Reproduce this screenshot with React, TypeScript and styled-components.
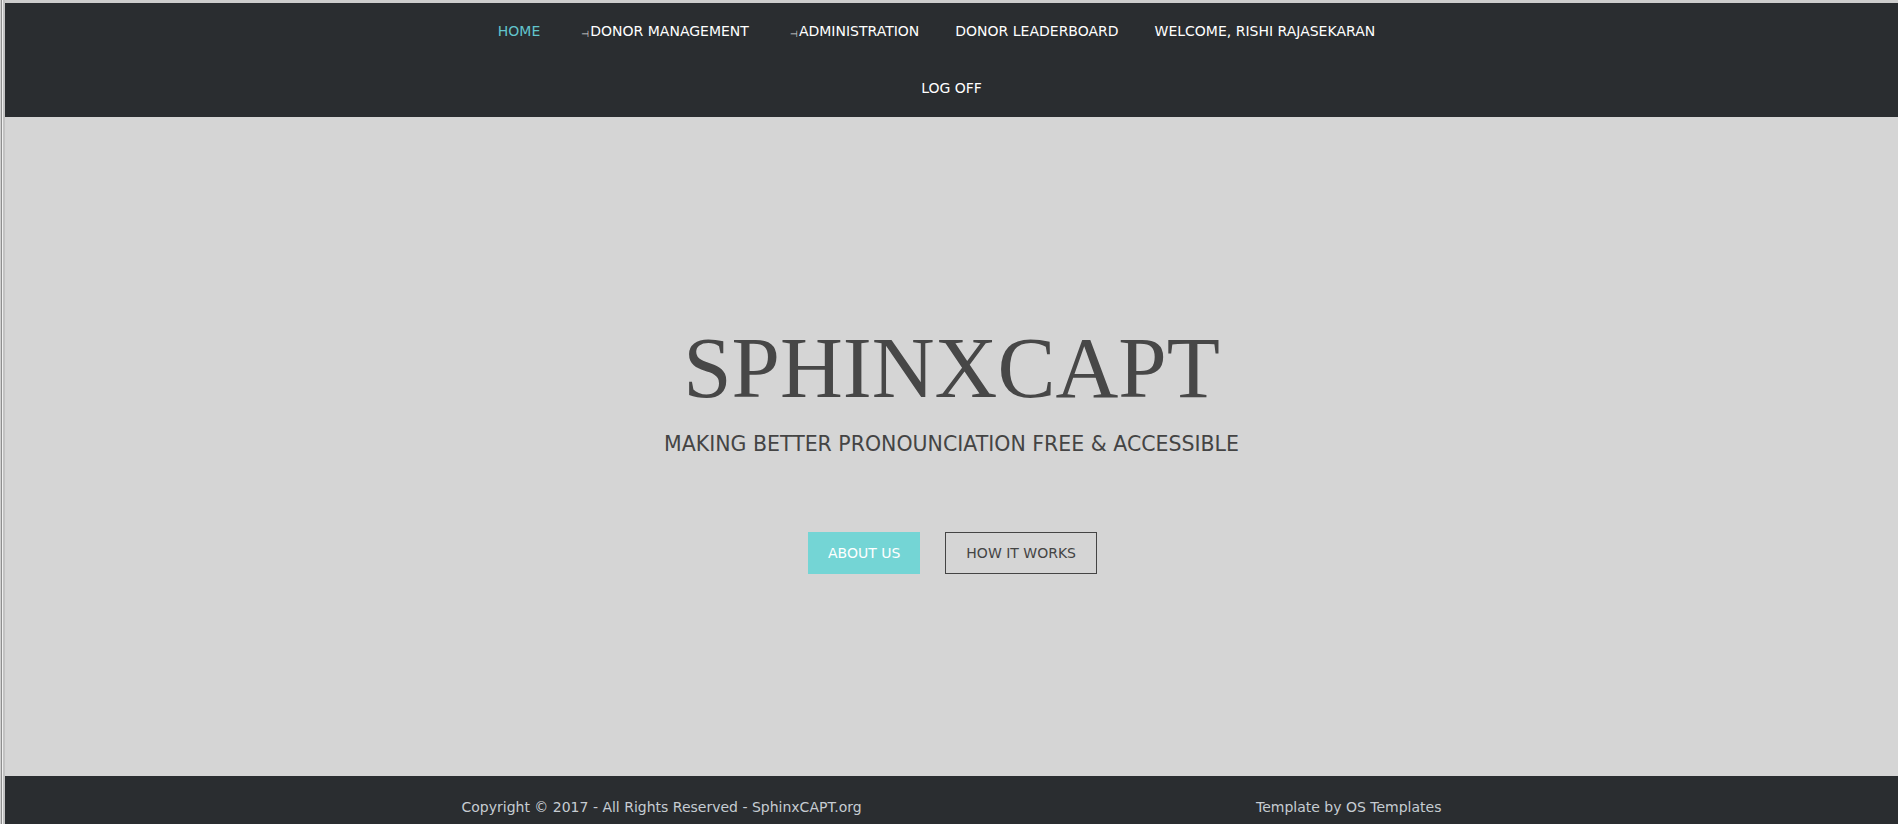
import React from "react";
import styled, { createGlobalStyle } from "styled-components";

const GlobalStyle = createGlobalStyle`
  html, body {
    margin: 0;
    padding: 0;
    background: #d0d0d0;
  }
  body {
    font-family: "DejaVu Sans", Verdana, sans-serif;
  }
`;

const navItems = [
  { label: "HOME", active: true },
  { label: "DONOR MANAGEMENT", caret: true },
  { label: "ADMINISTRATION", caret: true },
  { label: "DONOR LEADERBOARD" },
  { label: "WELCOME, RISHI RAJASEKARAN", trailing: true },
  { label: "LOG OFF" },
];

function App() {
  return (
    <>
      <GlobalStyle />
      <Frame>
        <TopBar>
          <NavList>
            {navItems.map((item) => (
              <NavItem
                key={item.label}
                $active={item.active}
                $trailing={item.trailing}
              >
                {item.caret && <Caret>⊣</Caret>}
                {item.label}
              </NavItem>
            ))}
          </NavList>
        </TopBar>

        <Hero>
          <Title>SPHINXCAPT</Title>
          <Tagline>MAKING BETTER PRONOUNCIATION FREE &amp; ACCESSIBLE</Tagline>
          <Buttons>
            <Button $primary>ABOUT US</Button>
            <Button>HOW IT WORKS</Button>
          </Buttons>
        </Hero>

        <Footer>
          <FooterInner>
            <span>Copyright © 2017 - All Rights Reserved - SphinxCAPT.org</span>
            <span>Template by OS Templates</span>
          </FooterInner>
        </Footer>
      </Frame>
    </>
  );
}

const Frame = styled.div`
  min-height: 824px;
  box-sizing: border-box;
  padding: 3px 0 0 5px;
  background:
    linear-gradient(
        to right,
        #cfcfcf 0 1px,
        #8e8e8e 1px 2px,
        #efefef 2px 3px,
        #c2c2c2 3px 5px
      )
      left top / 5px 100% no-repeat,
    #cdcdcd;
  display: flex;
  flex-direction: column;
`;

const TopBar = styled.header`
  background: #2a2d30;
  display: flex;
  justify-content: center;
`;

const NavList = styled.ul`
  width: 980px;
  margin: 0;
  padding: 0;
  list-style: none;
  display: flex;
  flex-wrap: wrap;
  justify-content: center;
`;

const NavItem = styled.li<{ $active?: boolean; $trailing?: boolean }>`
  padding: 0 ${(p) => (p.$trailing ? "48px" : "18px")} 0 18px;
  height: 57px;
  line-height: 57px;
  font-size: 14px;
  color: ${(p) => (p.$active ? "#62c4cc" : "#ffffff")};
  white-space: nowrap;
  cursor: pointer;
`;

const Caret = styled.span`
  display: inline-block;
  width: 9px;
  margin-left: 5px;
  font-size: 9px;
  line-height: 0;
  color: #d8d8d8;
  vertical-align: -1px;
`;

const Hero = styled.section`
  height: 659px;
  background: #d5d5d5;
  display: flex;
  flex-direction: column;
  align-items: center;
  justify-content: center;
  color: #474747;
`;

const Title = styled.h1`
  margin: 4px 0 0;
  font-family: "Liberation Serif", "Times New Roman", serif;
  font-weight: 400;
  font-size: 87px;
  line-height: 1;
  color: #474747;
`;

const Tagline = styled.p`
  margin: 21px 0 0;
  font-size: 20.5px;
  color: #444;
`;

const Buttons = styled.div`
  margin: 76px 0 0 2px;
  display: flex;
  gap: 25px;
`;

const Button = styled.a<{ $primary?: boolean }>`
  box-sizing: border-box;
  height: 42px;
  padding: 0 ${(p) => (p.$primary ? "19px" : "20px")};
  display: inline-flex;
  align-items: center;
  font-size: 14px;
  cursor: pointer;
  background: ${(p) => (p.$primary ? "#74d5d5" : "transparent")};
  color: ${(p) => (p.$primary ? "#ffffff" : "#444")};
  border: 1px solid ${(p) => (p.$primary ? "#74d5d5" : "#444")};
`;

const Footer = styled.footer`
  flex: 1;
  background: #2a2d30;
  display: flex;
  justify-content: center;
`;

const FooterInner = styled.div`
  width: 980px;
  padding-top: 23px;
  display: flex;
  justify-content: space-between;
  font-size: 14px;
  color: #c6ccd2;
`;

export default App;
